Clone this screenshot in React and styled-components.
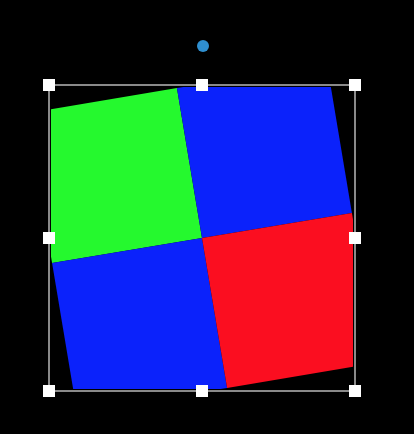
import styled, { createGlobalStyle } from "styled-components";

// Page reset
const GlobalStyle = createGlobalStyle`
  html, body {
    margin: 0;
    padding: 0;
    background: #000;
  }
  body {
    min-height: 100vh;
    font-family: "Liberation Sans", Arial, sans-serif;
  }
`;

const Stage = styled.div`
  width: 414px;
  height: 434px;

  display: flex;
  flex-direction: column;
  align-items: flex-start;

  padding: 40px 0 0 48px;
  box-sizing: border-box;

  background: #000;
`;

const RotateDot = styled.div`
  width: 12px;
  height: 12px;

  margin-left: 149px;
  margin-bottom: 32px;

  border-radius: 50%;
  background-color: #2f8fd0;
`;

const Frame = styled.div`
  position: relative;

  width: 308px;
  height: 308px;
  box-sizing: border-box;

  padding: 1px;
  border: 2px solid #8a8a8a;
`;

const Clip = styled.div`
  width: 302px;
  height: 302px;

  display: flex;
  justify-content: center;
  align-items: center;

  overflow: hidden;
`;

const Picture = styled.div`
  width: 304px;
  height: 304px;
  flex-shrink: 0;

  display: grid;
  grid-template-columns: 1fr 1fr;
  grid-template-rows: 1fr 1fr;

  transform: rotate(-9.5deg);
`;

const Quad = styled.div`
  background-color: ${({ $color }) => $color};
`;

const spot = {
  start: "-1px",
  center: "50%",
  end: "calc(100% + 1px)",
};

const Handle = styled.span`
  position: absolute;
  left: ${({ $x }) => spot[$x]};
  top: ${({ $y }) => spot[$y]};

  width: 12px;
  height: 12px;

  transform: translate(-50%, -50%);
  background-color: #fff;
`;

const handles = [
  ["start", "start"],
  ["center", "start"],
  ["end", "start"],
  ["start", "center"],
  ["end", "center"],
  ["start", "end"],
  ["center", "end"],
  ["end", "end"],
];

export default function App() {
  return (
    <>
      <GlobalStyle />
      <Stage>
        <RotateDot />
        <Frame>
          <Clip>
            <Picture>
              <Quad $color="#25f92e" />
              <Quad $color="#0b22fb" />
              <Quad $color="#0b22fb" />
              <Quad $color="#fb0e20" />
            </Picture>
          </Clip>
          {handles.map(([x, y]) => (
            <Handle key={x + y} $x={x} $y={y} />
          ))}
        </Frame>
      </Stage>
    </>
  );
}
